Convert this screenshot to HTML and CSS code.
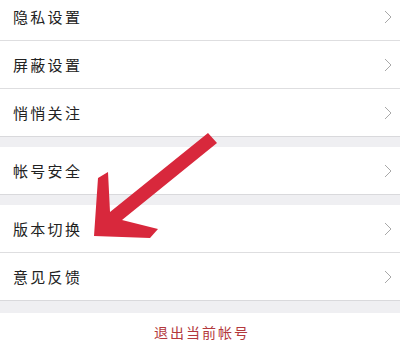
FILE: index.html
```html
<!DOCTYPE html>
<html lang="zh-CN">

<head>
    <meta charset="UTF-8">
    <meta name="viewport" content="width=device-width, initial-scale=1.0">
    <title>设置</title>
    <link rel="stylesheet" href="styles.css">
</head>

<body>

    <div class="page">
        <div class="group first">
            <div class="row"><span class="txt">隐私设置</span><svg class="arr" viewBox="0 0 8 14"><path d="M1 1 L7 7 L1 13" /></svg></div>
            <div class="row"><span class="txt">屏蔽设置</span><svg class="arr" viewBox="0 0 8 14"><path d="M1 1 L7 7 L1 13" /></svg></div>
            <div class="row"><span class="txt">悄悄关注</span><svg class="arr" viewBox="0 0 8 14"><path d="M1 1 L7 7 L1 13" /></svg></div>
        </div>

        <div class="group">
            <div class="row"><span class="txt">帐号安全</span><svg class="arr" viewBox="0 0 8 14"><path d="M1 1 L7 7 L1 13" /></svg></div>
        </div>

        <div class="group">
            <div class="row"><span class="txt">版本切换</span><svg class="arr" viewBox="0 0 8 14"><path d="M1 1 L7 7 L1 13" /></svg></div>
            <div class="row"><span class="txt">意见反馈</span><svg class="arr" viewBox="0 0 8 14"><path d="M1 1 L7 7 L1 13" /></svg></div>
        </div>

        <div class="group logout">
            <span>退出当前帐号</span>
        </div>

        <!-- 标注箭头 -->
        <svg class="mark" width="400" height="350" viewBox="0 0 400 350">
            <polygon points="94,236 98,178 108,172 110,212 208,133 217,143 122,220 158,229 150,238" fill="#d8283c" />
        </svg>
    </div>

</body>

</html>
```

FILE: styles.css
```css
body {
    margin: 0;
    background-color: #efeff2;
    font-family: "Noto Sans CJK SC", "Noto Sans", sans-serif;
}

.page {
    width: 400px;
    height: 350px;
    overflow: hidden;
    position: relative;
    display: flex;
    flex-flow: column;
    gap: 10px;
}

.group {
    background-color: #fff;
    border-bottom: 1px solid #d9d9dc;
}

.group.first {
    margin-top: -7px;
}

.row {
    height: 47px;
    display: flex;
    align-items: center;
    justify-content: space-between;
    padding: 0 8px 0 13px;
    border-bottom: 1px solid #dedee0;
}

.row:last-child {
    border-bottom: none;
}

.txt {
    font-size: 15px;
    letter-spacing: 2.3px;
    color: #222;
}

/* 右侧小箭头 */
.arr {
    width: 8px;
    height: 14px;
    fill: none;
    stroke: #a8a8a8;
    stroke-width: 1;
}

.logout {
    height: 44px;
    margin-top: 2px;
    border-bottom: none;
    display: flex;
    justify-content: center;
    align-items: center;
}

.logout span {
    font-size: 14px;
    letter-spacing: 2px;
    color: #b3383c;
    margin-left: 4px;
}

.mark {
    position: absolute;
    left: 0;
    top: 0;
}
```
